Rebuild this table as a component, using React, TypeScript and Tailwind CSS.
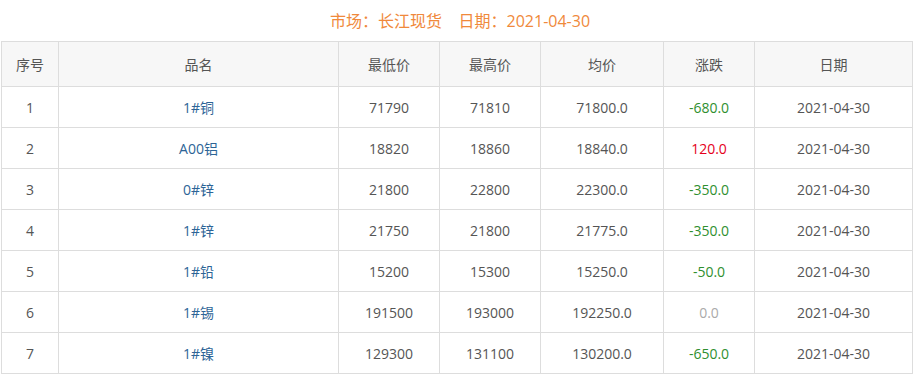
import React from "react";

const rows = [
  { id: 1, name: "1#铜", low: "71790", high: "71810", avg: "71800.0", chg: "-680.0", date: "2021-04-30" },
  { id: 2, name: "A00铝", low: "18820", high: "18860", avg: "18840.0", chg: "120.0", date: "2021-04-30" },
  { id: 3, name: "0#锌", low: "21800", high: "22800", avg: "22300.0", chg: "-350.0", date: "2021-04-30" },
  { id: 4, name: "1#锌", low: "21750", high: "21800", avg: "21775.0", chg: "-350.0", date: "2021-04-30" },
  { id: 5, name: "1#铅", low: "15200", high: "15300", avg: "15250.0", chg: "-50.0", date: "2021-04-30" },
  { id: 6, name: "1#锡", low: "191500", high: "193000", avg: "192250.0", chg: "0.0", date: "2021-04-30" },
  { id: 7, name: "1#镍", low: "129300", high: "131100", avg: "130200.0", chg: "-650.0", date: "2021-04-30" },
];

const headers = ["序号", "品名", "最低价", "最高价", "均价", "涨跌", "日期"];
const widths = ["w-[57px]", "w-[280px]", "w-[101px]", "w-[101px]", "w-[123px]", "w-[91px]", "w-[158px]"];

function chgColor(v: string) {
  if (v.startsWith("-")) return "text-[#2f8f2f]";
  if (v === "0.0") return "text-[#aaaaaa]";
  return "text-[#e5001b]";
}

export default function App() {
  return (
    <div className="w-[920px] h-[375px] bg-white overflow-hidden font-['Open_Sans','Noto_Sans_CJK_SC',sans-serif]">
      <div className="h-[41px] flex items-center justify-center text-[16px] text-[#f0893b]">
        市场：长江现货&nbsp;&nbsp;&nbsp;&nbsp;日期：2021-04-30
      </div>
      <table className="ml-px border-collapse table-fixed w-[911px] text-[14px] text-[#555]">
        <colgroup>
          {widths.map((w, i) => (
            <col key={i} className={w} />
          ))}
        </colgroup>
        <thead>
          <tr className="h-[45px] bg-[#f7f7f7]">
            {headers.map((h) => (
              <th key={h} className="border border-[#dddddd] font-normal text-center">
                {h}
              </th>
            ))}
          </tr>
        </thead>
        <tbody>
          {rows.map((r) => (
            <tr key={r.id} className="h-[41px]">
              <td className="border border-[#dddddd] text-center">{r.id}</td>
              <td className="border border-[#dddddd] text-center text-[#2d6496]">{r.name}</td>
              <td className="border border-[#dddddd] text-center">{r.low}</td>
              <td className="border border-[#dddddd] text-center">{r.high}</td>
              <td className="border border-[#dddddd] text-center">{r.avg}</td>
              <td className={`border border-[#dddddd] text-center ${chgColor(r.chg)}`}>{r.chg}</td>
              <td className="border border-[#dddddd] text-center">{r.date}</td>
            </tr>
          ))}
        </tbody>
      </table>
    </div>
  );
}
